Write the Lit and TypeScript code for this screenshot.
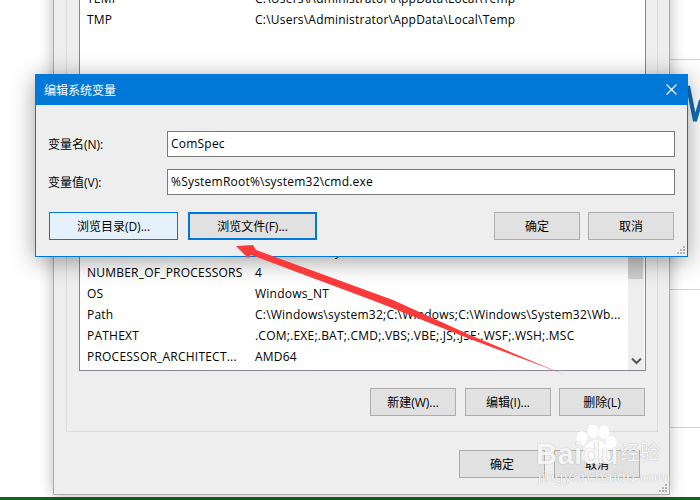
import { LitElement, html, css, svg } from "lit";
import { customElement } from "lit/decorators.js";

const topRows = [
  ["TEMP", "C:\\Users\\Administrator\\AppData\\Local\\Temp"],
  ["TMP", "C:\\Users\\Administrator\\AppData\\Local\\Temp"],
];
const sysRows = [
  ["DriverData", "C:\\Windows\\System32\\Drivers\\DriverData"],
  ["NUMBER_OF_PROCESSORS", "4"],
  ["OS", "Windows_NT"],
  ["Path", "C:\\Windows\\system32;C:\\Windows;C:\\Windows\\System32\\Wb..."],
  ["PATHEXT", ".COM;.EXE;.BAT;.CMD;.VBS;.VBE;.JS;.JSE;.WSF;.WSH;.MSC"],
  ["PROCESSOR_ARCHITECT...", "AMD64"],
];

const grip = svg`<svg class="grip-svg" width="8" height="8" viewBox="0 0 8 8"><g fill="#b4b4b4"><rect x="6" y="0" width="2" height="2"/><rect x="3" y="3" width="2" height="2"/><rect x="6" y="3" width="2" height="2"/><rect x="0" y="6" width="2" height="2"/><rect x="3" y="6" width="2" height="2"/><rect x="6" y="6" width="2" height="2"/></g></svg>`;

@customElement("app-root")
export class AppRoot extends LitElement {
  static styles = css`
    :host {
      display: block;
      position: relative;
      width: 700px;
      height: 500px;
      overflow: hidden;
      background: #fff;
      font-family: "Open Sans", "Noto Sans CJK SC", sans-serif;
      font-size: 12px;
      color: #000;
    }
    .desk-line {
      position: absolute;
      left: 670px;
      right: 0;
      height: 1px;
      background: #d2d2d2;
    }
    .chart { position: absolute; left: 680px; top: 80px; }
    .taskbar {
      position: absolute;
      left: 0;
      right: 0;
      bottom: 0;
      height: 3px;
      background: #17611a;
    }
    .back {
      position: absolute;
      left: 53px;
      top: -40px;
      width: 617px;
      height: 535px;
      box-sizing: border-box;
      background: #eee;
      border: 1px solid #ababab;
      box-shadow: 0 0 14px rgba(0, 0, 0, 0.28);
      display: flex;
      flex-direction: column;
      padding: 9px 0 0 12px;
    }
    .group {
      width: 592px;
      height: 462px;
      box-sizing: border-box;
      border: 1px solid #dcdcdc;
      padding: 10px 11px 0 12px;
      display: flex;
      flex-direction: column;
    }
    .list {
      box-sizing: border-box;
      background: #fff;
      border: 1px solid #828790;
      display: flex;
    }
    .list.user { height: 120px; }
    .list.sys { height: 140px; margin-top: 130px; }
    .rows { flex: 1; padding-top: 9px; min-width: 0; }
    .list.user .rows { padding-top: 6px; }
    .row {
      display: grid;
      grid-template-columns: 168px 1fr;
      height: 21px;
      align-items: center;
      padding-left: 7px;
      white-space: nowrap;
      letter-spacing: 0.22px;
    }
    .scroll {
      width: 16px;
      margin-right: 1px;
      background: #eee;
      position: relative;
      display: flex;
      flex-direction: column;
      justify-content: flex-end;
      align-items: center;
    }
    .thumb { position: absolute; left: 0; top: 0; width: 15px; height: 47px; background: #cdcdcd; }
    .chev { margin-bottom: 5px; }
    .btns { display: flex; margin-top: 17px; padding-right: 1px; justify-content: flex-end; }
    .btn {
      box-sizing: border-box;
      width: 86px;
      height: 28px;
      background: #e1e1e1;
      border: 1px solid #adadad;
      display: flex;
      align-items: center;
      justify-content: center;
      white-space: nowrap;
    }
    .btns .btn + .btn { margin-left: 9px; }
    .btns .btn:last-child { margin-left: 8px; }
    .footer { display: flex; justify-content: flex-end; margin-top: 18px; padding-right: 29px; }
    .footer .btn + .btn { margin-left: 9px; }
    .grip { position: absolute; right: 2px; bottom: 2px; line-height: 0; }

    .dialog {
      position: absolute;
      left: 35px;
      top: 74px;
      width: 653px;
      height: 183px;
      box-sizing: border-box;
      background: #eee;
      border: 1px solid #0078d7;
      border-top: 0;
      box-shadow: 0 4px 22px rgba(0, 0, 0, 0.38);
      display: flex;
      flex-direction: column;
    }
    .title {
      height: 31px;
      flex: none;
      margin: 0 -1px;
      background: #0078d7;
      color: #fff;
      display: flex;
      align-items: center;
      justify-content: space-between;
      padding: 0 11px 0 9px;
    }
    .body { padding: 26px 12px 0 12px; display: flex; flex-direction: column; }
    .form { display: grid; grid-template-columns: 119px 1fr; row-gap: 12px; align-items: center; }
    .field {
      box-sizing: border-box;
      height: 26px;
      background: #fff;
      border: 1px solid #7a7a7a;
      padding: 0 3px 2px;
      display: flex;
      align-items: center;
      letter-spacing: 0.22px;
    }
    .dlg-btns { display: flex; margin-top: 17px; padding: 0 1px; align-items: flex-start; }
    .wide { width: 129px; }
    .wide + .wide { margin-left: 10px; }
    .hover { background: #e5f1fb; border-color: #0078d7; }
    .focus { border: 2px solid #0078d7; }
    .ok { margin-left: auto; }
    .dlg-btns .cancel { margin-left: 8px; }

    .arrow { position: absolute; left: 0; top: 0; pointer-events: none; }
    .mark {
      position: absolute;
      left: 530px;
      top: 425px;
      width: 140px;
      height: 62px;
      color: rgba(255, 255, 255, 0.92);
      text-shadow: 0 0 1px rgba(0, 0, 0, 0.35);
      font-family: "Liberation Sans", "Noto Sans CJK SC", sans-serif;
    }
    .paw { position: absolute; left: 44px; top: 0; }
    .bd { position: absolute; left: 6px; top: 13px; font-size: 29px; font-weight: 700; line-height: 32px; letter-spacing: 0.5px; }
    .jy { position: absolute; left: 90px; top: 16px; font-size: 20px; line-height: 24px; }
    .url { position: absolute; left: 8px; top: 43px; font-size: 15.5px; line-height: 18px; letter-spacing: 0.45px; }
  `;

  private row(r: string[]) {
    return html`<div class="row"><span>${r[0]}</span><span>${r[1]}</span></div>`;
  }

  render() {
    return html`
      <div class="desk-line" style="top:59px"></div>
      <div class="desk-line" style="top:289px"></div>
      <div class="desk-line" style="top:427px"></div>
      <svg class="chart" width="20" height="50" viewBox="0 0 20 50">
        <path d="M8 6 L15 41 L21 20" fill="none" stroke="#0f6fb4" stroke-width="4"/>
      </svg>
      <div class="taskbar"></div>

      <div class="back">
        <div class="group">
          <div class="list user"><div class="rows">${topRows.map((r) => this.row(r))}</div></div>
          <div class="list sys">
            <div class="rows">${sysRows.map((r) => this.row(r))}</div>
            <div class="scroll">
              <div class="thumb"></div>
              <svg class="chev" width="11" height="8" viewBox="0 0 11 8"><path d="M1 1.5 L5.5 6 L10 1.5" fill="none" stroke="#555" stroke-width="2"/></svg>
            </div>
          </div>
          <div class="btns">
            <div class="btn">新建(W)...</div>
            <div class="btn">编辑(I)...</div>
            <div class="btn">删除(L)</div>
          </div>
        </div>
        <div class="footer">
          <div class="btn">确定</div>
          <div class="btn">取消</div>
        </div>
        <div class="grip">${grip}</div>
      </div>

      <div class="dialog">
        <div class="title">
          <span>编辑系统变量</span>
          <svg width="11" height="11" viewBox="0 0 11 11"><path d="M0.5 0.5 L10.5 10.5 M10.5 0.5 L0.5 10.5" stroke="#fff" stroke-width="1.1"/></svg>
        </div>
        <div class="body">
          <div class="form">
            <span>变量名(N):</span>
            <div class="field">ComSpec</div>
            <span>变量值(V):</span>
            <div class="field">%SystemRoot%\\system32\\cmd.exe</div>
          </div>
          <div class="dlg-btns">
            <div class="btn wide hover">浏览目录(D)...</div>
            <div class="btn wide focus">浏览文件(F)...</div>
            <div class="btn ok">确定</div>
            <div class="btn cancel">取消</div>
          </div>
        </div>
        <div class="grip">${grip}</div>
      </div>

      <svg class="arrow" width="700" height="500" viewBox="0 0 700 500">
        <defs>
          <linearGradient id="ag" gradientUnits="userSpaceOnUse" x1="236" y1="246" x2="568" y2="376">
            <stop offset="0" stop-color="#fb3b3b"/>
            <stop offset="0.85" stop-color="#fb3b3b"/>
            <stop offset="1" stop-color="#fca0a0"/>
          </linearGradient>
        </defs>
        <polygon fill="url(#ag)" points="236,246 253,245 256,250 393,300 470,335 568,376 470,339 377,302 251,255 248,258"/>
      </svg>

      <div class="mark">
        <svg class="paw" width="50" height="42" viewBox="0 0 50 42" fill="rgba(255,255,255,0.9)">
          <ellipse cx="8" cy="13" rx="5.5" ry="7"/>
          <ellipse cx="19" cy="6" rx="5.5" ry="7"/>
          <ellipse cx="30" cy="7" rx="5.5" ry="7"/>
          <ellipse cx="37" cy="18" rx="5.5" ry="7"/>
          <path d="M22 15 C14 15 9 24 8 30 C7 37 14 39 22 38 C30 39 37 37 36 30 C35 24 30 15 22 15 Z"/>
        </svg>
        <div class="bd">Baidu</div>
        <div class="jy">经验</div>
        <div class="url">jingyan.baidu.com</div>
      </div>
    `;
  }
}
